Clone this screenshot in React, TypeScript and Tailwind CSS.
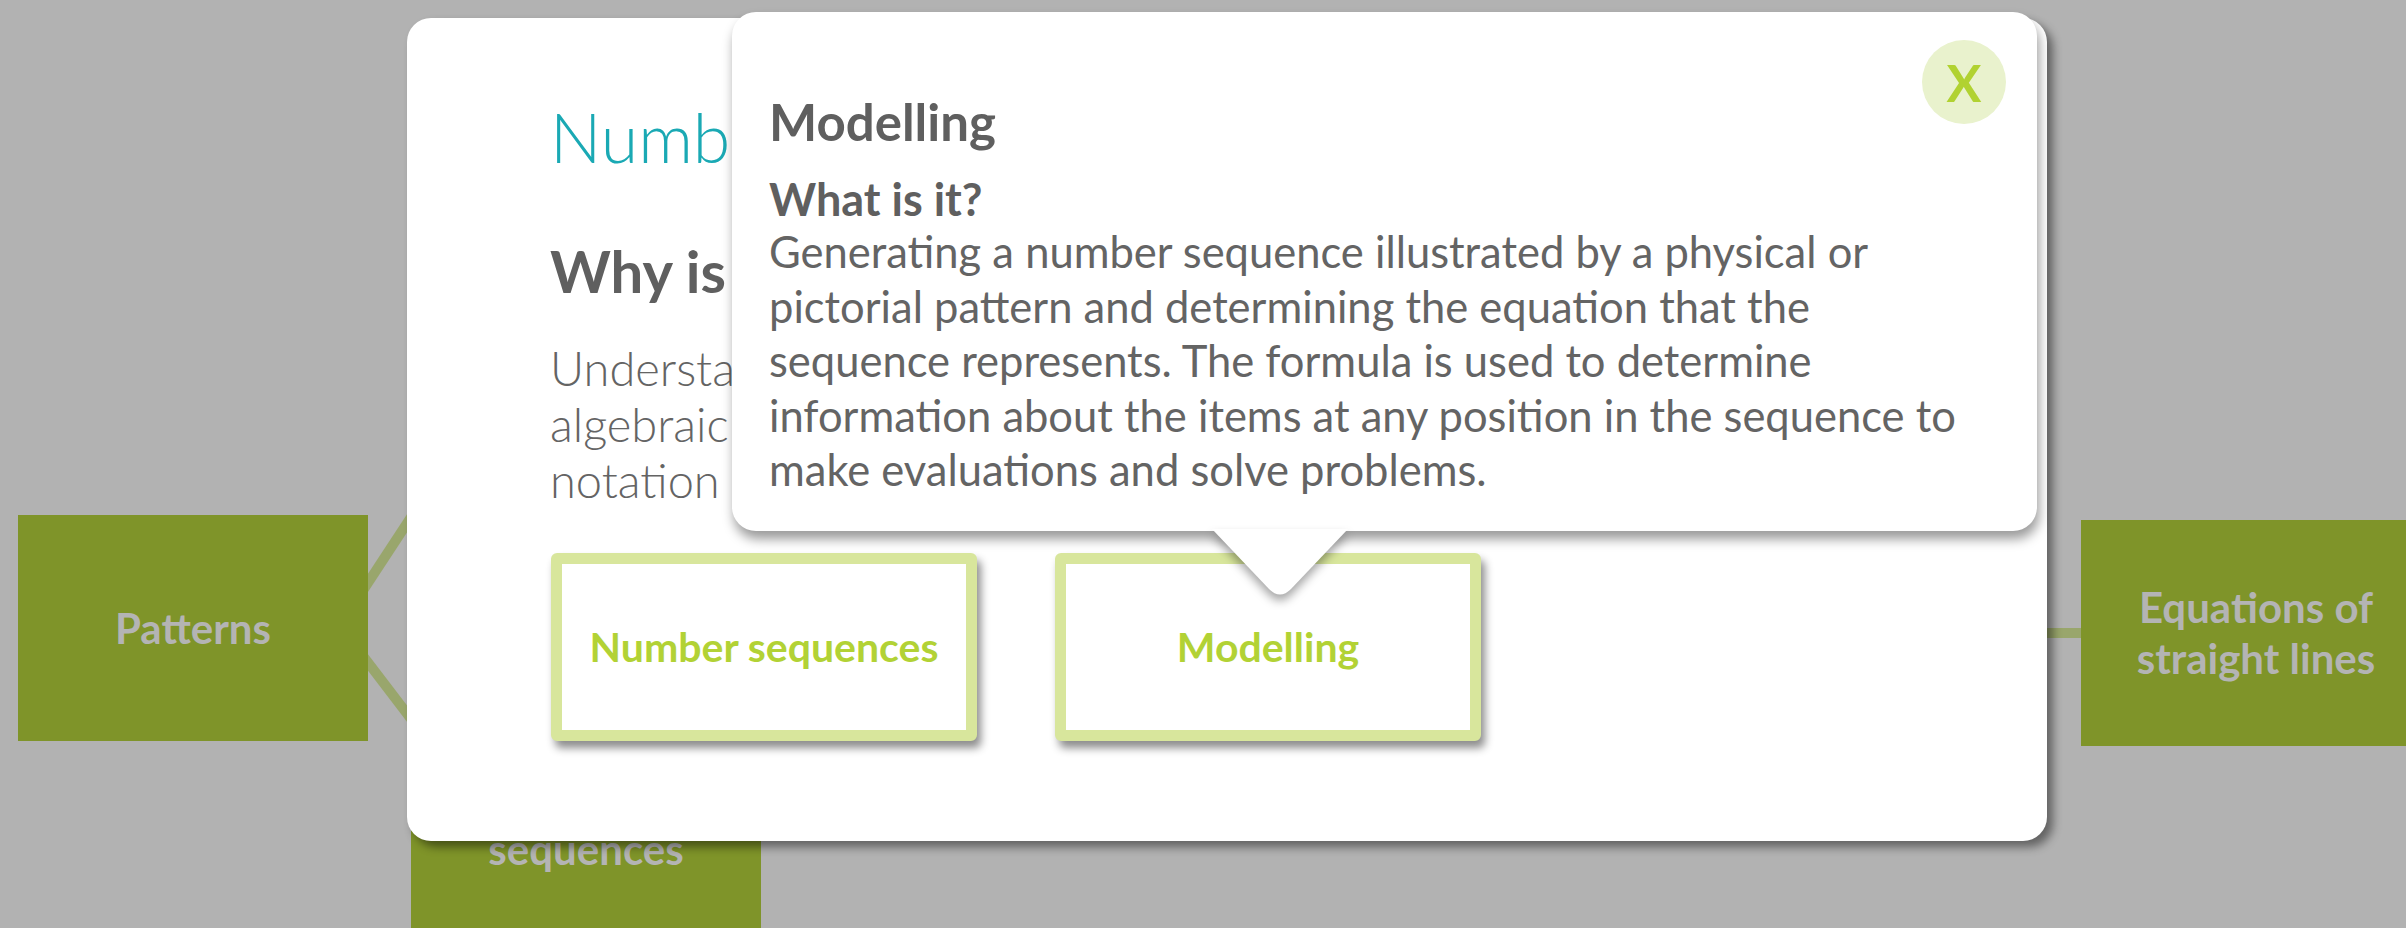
const nodeBox =
  "absolute flex h-[226px] w-[350px] items-center justify-center bg-[#7f9429] text-center text-[42px] font-bold leading-[51px] text-[#b4b4b4]";

function DiagramLines() {
  return (
    <svg className="absolute inset-0" width="2406" height="928">
      <g stroke="#99a66c" strokeWidth="10" fill="none">
        <line x1="360" y1="595" x2="560" y2="290" />
        <line x1="360" y1="652" x2="450" y2="770" />
        <line x1="1900" y1="633" x2="2090" y2="633" />
      </g>
    </svg>
  );
}

function TopicCard({ label }: { label: string }) {
  return (
    <div className="flex h-[188px] w-[426px] items-center justify-center rounded-md border-[11px] border-[#d8e69c] bg-white shadow-[4px_7px_8px_rgba(0,0,0,0.45)]">
      <span className="text-[41px] font-bold text-[#b2d235]">{label}</span>
    </div>
  );
}

function Tooltip() {
  return (
    <div className="absolute left-[732px] top-[12px] h-[519px] w-[1305px] rounded-[24px] bg-white pl-[37px] pt-[81px] text-[#646464] shadow-[2px_8px_12px_rgba(0,0,0,0.4)]">
      <div className="flex flex-col">
        <h3 className="text-[51px] font-bold leading-[58px] text-[#5f5f5f]">Modelling</h3>
        <h4 className="mt-[23px] text-[45px] font-bold leading-[50px] text-[#5f5f5f]">What is it?</h4>
        <p className="text-[43.5px] leading-[54.5px]">
          Generating a number sequence illustrated by a physical or
          <br />
          pictorial pattern and determining the equation that the
          <br />
          sequence represents. The formula is used to determine
          <br />
          information about the items at any position in the sequence to
          <br />
          make evaluations and solve problems.
        </p>
      </div>

      <button className="absolute left-[1190px] top-[28px] flex h-[84px] w-[84px] items-center justify-center rounded-full bg-[#e9f2cd] text-[52px] font-bold leading-none text-[#b1d231]">
        X
      </button>

      {/* pointer down to the Modelling card */}
      <svg
        className="absolute left-[480px] top-[517px] drop-shadow-[0_6px_5px_rgba(0,0,0,0.35)]"
        width="136"
        height="74"
      >
        <path d="M0 0 H136 L79 60 Q68 71 57 60 Z" fill="white" />
      </svg>
    </div>
  );
}

export default function App() {
  return (
    <div className="relative h-[928px] w-[2406px] overflow-hidden bg-[#b2b2b2] font-['Lato','Open_Sans',sans-serif]">
      <DiagramLines />

      <div className={`${nodeBox} left-[18px] top-[515px]`}>Patterns</div>
      <div className={`${nodeBox} left-[411px] top-[711px]`}>
        Number
        <br />
        sequences
      </div>
      <div className={`${nodeBox} left-[2081px] top-[520px]`}>
        Equations of
        <br />
        straight lines
      </div>

      {/* modal */}
      <div className="absolute left-[407px] top-[18px] flex h-[823px] w-[1640px] flex-col rounded-[24px] bg-white pl-[143px] pt-[78px] text-[#646464] shadow-[6px_6px_10px_rgba(0,0,0,0.45)]">
        <h2 className="text-[68px] font-light leading-[82px] text-[#1aa9b4]">Number sequences</h2>
        <h3 className="mt-[61px] text-[58px] font-bold leading-[64px] text-[#5f5f5f]">
          Why is it important?
        </h3>
        <p className="mt-[37px] text-[47px] font-light leading-[56px]">
          Understanding number sequences builds the foundation for
          <br />
          algebraic thinking and describing patterns with formal
          <br />
          notation and general rules.
        </p>

        <div className="ml-[1px] mt-[45px] flex gap-[78px]">
          <TopicCard label="Number sequences" />
          <TopicCard label="Modelling" />
        </div>
      </div>

      <Tooltip />
    </div>
  );
}
